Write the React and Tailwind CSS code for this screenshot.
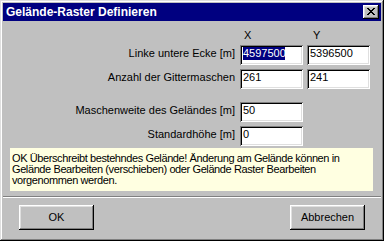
import React from "react";

function Input({ value, selected }) {
  return (
    <div className="h-[20px] w-[63px] bg-white shadow-[inset_1px_1px_0_#808080,inset_-1px_-1px_0_#fff,inset_2px_2px_0_#000,inset_-2px_-2px_0_#dfdfdf] pt-[2px] pl-[3px] overflow-hidden">
      {selected ? (
        <span className="inline-block h-[13px] w-[42px] overflow-hidden whitespace-nowrap bg-[#000080] text-white leading-[13px] align-top">
          {value}
        </span>
      ) : (
        <span className="block leading-[13px] whitespace-nowrap">{value}</span>
      )}
    </div>
  );
}

function Label({ children }) {
  return (
    <div className="text-right pt-[2px] leading-[13px] whitespace-nowrap pr-[1px]">{children}</div>
  );
}

function Button({ children }) {
  return (
    <button className="h-[25px] w-[75px] bg-[#c0c0c0] shadow-[inset_-1px_-1px_0_#000,inset_1px_1px_0_#fff,inset_-2px_-2px_0_#808080,inset_2px_2px_0_#dfdfdf] flex items-center justify-center leading-[13px] text-black">
      {children}
    </button>
  );
}

function CloseButton() {
  return (
    <div className="w-[16px] h-[14px] bg-[#c0c0c0] shadow-[inset_-1px_-1px_0_#000,inset_1px_1px_0_#fff,inset_-2px_-2px_0_#808080,inset_2px_2px_0_#dfdfdf] relative">
      <svg width="16" height="14" viewBox="0 0 16 14" shapeRendering="crispEdges" className="absolute left-0 top-0">
        <g fill="#000">
          <rect x="4" y="3" width="2" height="1" />
          <rect x="10" y="3" width="2" height="1" />
          <rect x="5" y="4" width="2" height="1" />
          <rect x="9" y="4" width="2" height="1" />
          <rect x="6" y="5" width="4" height="1" />
          <rect x="7" y="6" width="2" height="1" />
          <rect x="6" y="7" width="4" height="1" />
          <rect x="5" y="8" width="2" height="1" />
          <rect x="9" y="8" width="2" height="1" />
          <rect x="4" y="9" width="2" height="1" />
          <rect x="10" y="9" width="2" height="1" />
        </g>
      </svg>
    </div>
  );
}

export default function App() {
  return (
    <div className="w-[384px] h-[241px] bg-[#c0c0c0] p-[3px] flex flex-col shadow-[inset_-1px_-1px_0_#000,inset_1px_1px_0_#dfdfdf,inset_-2px_-2px_0_#808080,inset_2px_2px_0_#fff] font-['Liberation_Sans',Arial,sans-serif] text-[11px] text-black overflow-hidden">
      <div className="h-[18px] shrink-0 bg-[#000080] flex items-center justify-between pl-[3px] pr-[2px]">
        <span className="text-white font-bold text-[12px] leading-[14px] whitespace-nowrap">Gelände-Raster Definieren</span>
        <CloseButton />
      </div>

      <div className="mt-[8px] grid grid-cols-[233px_63px_63px] gap-x-[4px]">
        <div />
        <div className="h-[13px] leading-[13px] pl-[4px]">X</div>
        <div className="h-[13px] leading-[13px] pl-[6px]">Y</div>
      </div>

      <div className="mt-[3px] grid grid-cols-[233px_63px_63px] gap-x-[4px] gap-y-[4px]">
        <Label>Linke untere Ecke [m]</Label>
        <Input value="4597500" selected />
        <Input value="5396500" />
        <Label>Anzahl der Gittermaschen</Label>
        <Input value="261" />
        <Input value="241" />
      </div>

      <div className="mt-[13px] grid grid-cols-[233px_63px] gap-x-[4px] gap-y-[4px]">
        <Label>Maschenweite des Geländes [m]</Label>
        <Input value="50" />
        <Label>Standardhöhe [m]</Label>
        <Input value="0" />
      </div>

      <div className="mt-[2px] ml-[7px] w-[363px] h-[43px] shrink-0 bg-[#ffffe1] pt-[5px] pl-[2px] leading-[11px] tracking-[-0.4px] whitespace-nowrap">
        OK Überschreibt bestehndes Gelände! Änderung am Gelände können in
        <br />
        Gelände Bearbeiten (verschieben) oder Gelände Raster Bearbeiten
        <br />
        vorgenommen werden.
      </div>

      <div className="mt-[5px] h-[2px] shrink-0 border-t border-t-[#808080] border-b border-b-white" />

      <div className="mt-[7px] flex justify-between px-[16px]">
        <Button>OK</Button>
        <Button>Abbrechen</Button>
      </div>
    </div>
  );
}
